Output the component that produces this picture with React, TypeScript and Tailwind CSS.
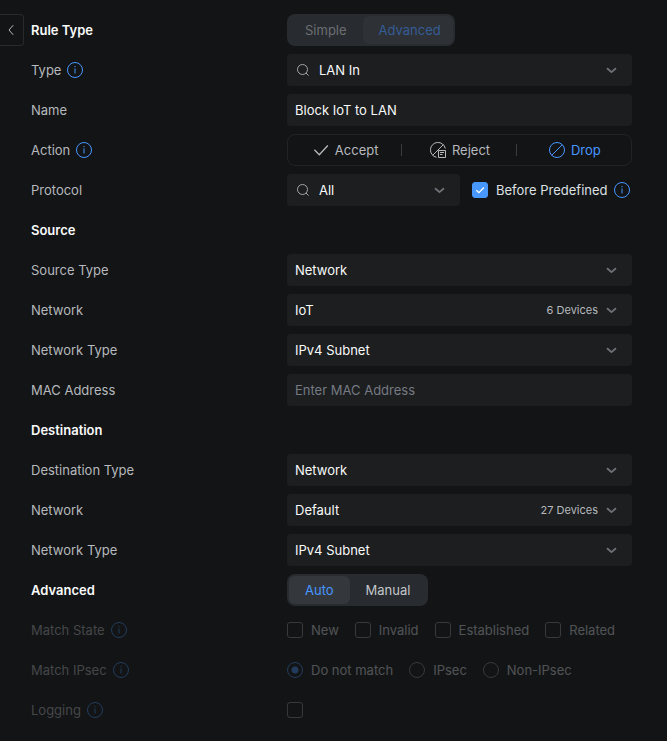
import { useState, type ReactNode } from "react";

function InfoIcon() {
  return (
    <svg width="20" height="20" viewBox="0 0 20 20" fill="none" className="shrink-0 text-[#4797ff]">
      <circle cx="10" cy="10" r="7.5" stroke="currentColor" />
      <path d="M10 8.5v5" stroke="currentColor" />
      <path d="M10 6v1.2" stroke="currentColor" />
    </svg>
  );
}

function SearchIcon() {
  return (
    <svg width="16" height="16" viewBox="0 0 16 16" fill="none" stroke="currentColor" className="shrink-0 text-[#a3a6ab]">
      <circle cx="7.5" cy="7.5" r="5" />
      <path d="M11 11l2.6 2.6" />
    </svg>
  );
}

function ChevronIcon() {
  return (
    <svg width="16" height="16" viewBox="0 0 16 16" fill="none" className="shrink-0 text-[#6f7277]">
      <path d="M3 6.2l4.5 3.9L12 6.2" stroke="currentColor" strokeWidth="1.8" />
    </svg>
  );
}

function AcceptIcon() {
  return (
    <svg width="20" height="20" viewBox="0 0 20 20" fill="none" className="shrink-0">
      <path d="M3.4 9.8l4.9 4.9 8.5-9.2" stroke="currentColor" strokeWidth="1.3" />
    </svg>
  );
}

function RejectIcon() {
  return (
    <svg width="20" height="20" viewBox="0 0 20 20" fill="none" stroke="currentColor" className="shrink-0">
      <path d="M8.5 17.3A7.5 7.5 0 1 1 17.3 8.5" />
      <path d="M4.7 15.3L15.3 4.7" />
      <path d="M10.5 10.5h7v7h-7z" />
      <path d="M12 12.5h4M12 14.5h2.5" />
    </svg>
  );
}

function DropIcon() {
  return (
    <svg width="20" height="20" viewBox="0 0 20 20" fill="none" stroke="currentColor" className="shrink-0">
      <circle cx="10" cy="10" r="7.5" />
      <path d="M4.7 15.3L15.3 4.7" />
    </svg>
  );
}

type RowProps = {
  label: string;
  htmlFor?: string;
  info?: boolean;
  disabled?: boolean;
  children: ReactNode;
};

function Row({ label, htmlFor, info, disabled, children }: RowProps) {
  return (
    <div className={disabled ? "flex h-8 items-center opacity-30" : "flex h-8 items-center"}>
      <div className="flex w-64 shrink-0 items-center gap-1 text-[#b6b9bd]">
        {htmlFor ? <label htmlFor={htmlFor}>{label}</label> : <span>{label}</span>}
        {info && <InfoIcon />}
      </div>
      <div className="flex min-w-0 flex-1 items-center">{children}</div>
    </div>
  );
}

function Heading({ children }: { children: ReactNode }) {
  return <h2 className="w-64 shrink-0 font-semibold text-[#f9fafa]">{children}</h2>;
}

type SelectFieldProps = {
  id: string;
  options: string[];
  search?: boolean;
  note?: string;
};

function SelectField({ id, options, search, note }: SelectFieldProps) {
  return (
    <div className="flex h-8 w-full items-center gap-2 rounded bg-[#1c1e20] pr-3 pl-2">
      {search && <SearchIcon />}
      <select id={id} className="h-8 min-w-0 flex-1 appearance-none bg-transparent text-[#f9fafa] outline-none">
        {options.map((o) => (
          <option key={o}>{o}</option>
        ))}
      </select>
      <div className="flex items-center gap-1.5">
        {note && <span className="text-[11px] text-[#b6b9bd]">{note}</span>}
        <ChevronIcon />
      </div>
    </div>
  );
}

type SegmentedProps = {
  options: string[];
  value: string;
  onChange?: (v: string) => void;
  disabled?: boolean;
};

function Segmented({ options, value, onChange, disabled }: SegmentedProps) {
  return (
    <div className="flex h-8 rounded-lg bg-[#282b2f] p-0.5">
      {options.map((o) => (
        <button
          key={o}
          type="button"
          disabled={disabled}
          onClick={() => onChange?.(o)}
          className={
            o === value
              ? disabled
                ? "rounded-md bg-[#2e3135] pr-3 pl-4 text-[#355d97]"
                : "rounded-md bg-[#34383d] px-4 text-[#4797ff]"
              : disabled
                ? "rounded-md px-4 text-[#6c6f74]"
                : "rounded-md px-4 text-[#c3c6ca]"
          }
        >
          {o}
        </button>
      ))}
    </div>
  );
}

const actions = [
  { name: "Accept", icon: <AcceptIcon /> },
  { name: "Reject", icon: <RejectIcon /> },
  { name: "Drop", icon: <DropIcon /> },
];

const states = ["New", "Invalid", "Established", "Related"];
const ipsecModes = ["Do not match", "IPsec", "Non-IPsec"];

const boxClass = "size-4 shrink-0 appearance-none rounded-[3px] border border-[#8c8f94]";

export default function App() {
  const [action, setAction] = useState("Drop");
  const [mode, setMode] = useState("Auto");
  const [before, setBefore] = useState(true);

  return (
    <div className="flex min-h-screen items-start gap-[7px] bg-[#131416] py-3.5 font-['Inter',sans-serif] text-[13px] leading-5">
      <button
        type="button"
        aria-label="Back"
        className="flex h-8 w-6 shrink-0 items-center justify-center rounded-r border border-l-0 border-[#282a2d] text-[#b6b9bd]"
      >
        <svg width="16" height="16" viewBox="0 0 16 16" fill="none" stroke="currentColor">
          <path d="M9.2 3.2L5 8l4.2 4.8" />
        </svg>
      </button>

      <form className="flex min-w-0 flex-1 flex-col gap-2 pr-[35px]">
        <div className="flex h-8 items-center">
          <Heading>Rule Type</Heading>
          <Segmented options={["Simple", "Advanced"]} value="Advanced" disabled />
        </div>
        <Row label="Type" htmlFor="type" info>
          <SelectField id="type" options={["LAN In", "LAN Out", "LAN Local"]} search />
        </Row>
        <Row label="Name" htmlFor="name">
          <input
            id="name"
            type="text"
            defaultValue="Block IoT to LAN"
            className="h-8 w-full rounded bg-[#1c1e20] px-2 text-[#f9fafa] outline-none"
          />
        </Row>
        <Row label="Action" info>
          <div className="flex h-8 w-full items-center rounded-lg border border-[#212327]">
            {actions.map((a, i) => (
              <div key={a.name} className="flex flex-1 items-center">
                <button
                  type="button"
                  onClick={() => setAction(a.name)}
                  className={
                    a.name === action
                      ? "flex flex-1 items-center justify-center gap-1 text-[#4797ff]"
                      : "flex flex-1 items-center justify-center gap-1 text-[#b6b9bd]"
                  }
                >
                  {a.icon}
                  {a.name}
                </button>
                {i < actions.length - 1 && <span className="h-3 w-px bg-[#3a3d41]" />}
              </div>
            ))}
          </div>
        </Row>
        <Row label="Protocol" htmlFor="protocol">
          <div className="w-[173px] shrink-0">
            <SelectField id="protocol" options={["All", "TCP", "UDP"]} search />
          </div>
          <div className="ml-3 flex items-center gap-1 whitespace-nowrap">
            <label className="flex items-center gap-2 text-[#dee0e3]">
              <span className="grid size-4 shrink-0">
                <input
                  type="checkbox"
                  checked={before}
                  onChange={(e) => setBefore(e.target.checked)}
                  className="col-start-1 row-start-1 size-4 appearance-none rounded-[3px] border border-[#4797ff] checked:bg-[#4797ff]"
                />
                {before && (
                  <svg
                    width="16"
                    height="16"
                    viewBox="0 0 16 16"
                    fill="none"
                    className="pointer-events-none col-start-1 row-start-1"
                  >
                    <path d="M4.3 8.2l2.6 2.5 5-5.2" stroke="#fff" strokeWidth="1.3" />
                  </svg>
                )}
              </span>
              Before Predefined
            </label>
            <InfoIcon />
          </div>
        </Row>

        <div className="flex h-8 items-center">
          <Heading>Source</Heading>
        </div>
        <Row label="Source Type" htmlFor="source-type">
          <SelectField id="source-type" options={["Network", "Port/IP Group"]} />
        </Row>
        <Row label="Network" htmlFor="source-network">
          <SelectField id="source-network" options={["IoT", "Default"]} note="6 Devices" />
        </Row>
        <Row label="Network Type" htmlFor="source-network-type">
          <SelectField id="source-network-type" options={["IPv4 Subnet", "Gateway IP"]} />
        </Row>
        <Row label="MAC Address" htmlFor="mac">
          <input
            id="mac"
            type="text"
            placeholder="Enter MAC Address"
            className="h-8 w-full rounded bg-[#1c1e20] px-2 text-[#f9fafa] outline-none placeholder:text-[#757a82]"
          />
        </Row>

        <div className="flex h-8 items-center">
          <Heading>Destination</Heading>
        </div>
        <Row label="Destination Type" htmlFor="dest-type">
          <SelectField id="dest-type" options={["Network", "Port/IP Group"]} />
        </Row>
        <Row label="Network" htmlFor="dest-network">
          <SelectField id="dest-network" options={["Default", "IoT"]} note="27 Devices" />
        </Row>
        <Row label="Network Type" htmlFor="dest-network-type">
          <SelectField id="dest-network-type" options={["IPv4 Subnet", "Gateway IP"]} />
        </Row>

        <div className="flex h-8 items-center">
          <Heading>Advanced</Heading>
          <Segmented options={["Auto", "Manual"]} value={mode} onChange={setMode} />
        </div>
        <Row label="Match State" info disabled>
          <div className="flex gap-4">
            {states.map((s) => (
              <label key={s} className="flex items-center gap-2 text-[#dee0e3]">
                <input type="checkbox" disabled className={boxClass} />
                {s}
              </label>
            ))}
          </div>
        </Row>
        <Row label="Match IPsec" info disabled>
          <div className="flex gap-4 whitespace-nowrap">
            {ipsecModes.map((m, i) => (
              <label key={m} className="flex items-center gap-2 text-[#dee0e3]">
                <input
                  type="radio"
                  name="ipsec"
                  defaultChecked={i === 0}
                  disabled
                  className="size-4 shrink-0 appearance-none rounded-full border border-[#8c8f94] checked:border-[#4797ff] checked:bg-[radial-gradient(circle,#4797ff_3px,transparent_4px)]"
                />
                {m}
              </label>
            ))}
          </div>
        </Row>
        <Row label="Logging" htmlFor="logging" info disabled>
          <input id="logging" type="checkbox" disabled className={boxClass} />
        </Row>
      </form>
    </div>
  );
}
